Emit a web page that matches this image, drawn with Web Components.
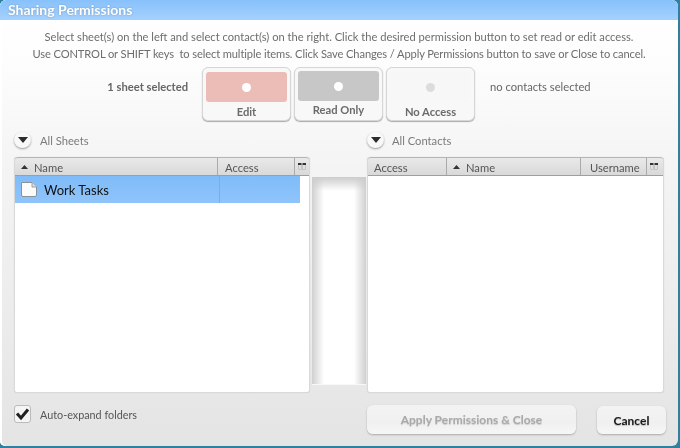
<!DOCTYPE html>
<html><head><meta charset="utf-8"><title>Sharing Permissions</title>
<style>
html,body{margin:0;padding:0;width:680px;height:448px;overflow:hidden;background:#fff}
body{font-family:Lato,"Open Sans",sans-serif;}
</style></head><body>
<sp-dialog>
  <span slot="title">Sharing Permissions</span>
  <sp-instructions>
    <div>Select sheet(s) on the left and select contact(s) on the right. Click the desired permission button to set read or edit access.</div>
    <div style="letter-spacing:-.12px">Use CONTROL or SHIFT keys&nbsp; to select multiple items. Click Save Changes / Apply Permissions button to save or Close to cancel.</div>
  </sp-instructions>
  <sp-perm-row>
    <span slot="left">1 sheet selected</span>
    <sp-perm kind="edit">Edit</sp-perm>
    <sp-perm kind="read">Read Only</sp-perm>
    <sp-perm kind="none">No Access</sp-perm>
    <span slot="right">no contacts selected</span>
  </sp-perm-row>
  <sp-columns>
    <sp-panel slot="left" label="All Sheets" cols="sheets"><sp-row>Work Tasks</sp-row></sp-panel>
    <sp-panel slot="right" label="All Contacts" cols="contacts"></sp-panel>
  </sp-columns>
  <sp-footer>
    <sp-check>Auto-expand folders</sp-check>
    <sp-btn disabled style="width:209px">Apply Permissions &amp; Close</sp-btn>
    <sp-btn style="width:69px;margin:1px 0 0 21px;height:28px">Cancel</sp-btn>
  </sp-footer>
</sp-dialog>
<script>
function def(name, html){
  customElements.define(name, class extends HTMLElement{
    constructor(){super();this.attachShadow({mode:'open'}).innerHTML=typeof html==='function'?html(this):html;}
  });
}
def('sp-dialog',`<style>
:host{display:block;width:680px;height:448px;background:#2f7f9f;position:relative;overflow:hidden}
.win{box-sizing:border-box;width:678px;height:446px;border-radius:6px 6px 6px 5px;overflow:hidden;display:flex;flex-direction:column;
 background:linear-gradient(#fff 0,#fdfdfd 60px,#f4f4f4 170px,#ebebeb 330px,#e4e4e4 446px);filter:blur(.3px);
 box-shadow:inset 2px 0 0 #fff}
.t{height:20px;flex:none;background:linear-gradient(#87c1fb,#a5d1fe);color:#fff;font:700 14px/20px Lato,sans-serif;padding-left:8px;text-shadow:0 0 2px #6b93b8}
</style><div class="win"><div class="t"><slot name="title"></slot></div><slot></slot></div>`);
def('sp-instructions',`<style>:host{display:block;height:47px;padding-top:8px;box-sizing:border-box;text-align:center;color:#6d6d6d;font-size:11.15px;line-height:17px;flex:none;white-space:nowrap}</style><slot></slot>`);
def('sp-perm-row',`<style>:host{display:flex;align-items:flex-start;height:54px;flex:none;color:#666;font-size:11.2px}
.l{width:188px;text-align:right;font-weight:700;line-height:39px;margin-right:14px;white-space:nowrap}
.r{line-height:39px;margin-left:15px;white-space:nowrap}
.b{display:flex;gap:3px}
</style><div class="l"><slot name="left"></slot></div><div class="b"><slot></slot></div><div class="r"><slot name="right"></slot></div>`);
def('sp-perm',el=>{
 const k=el.getAttribute('kind');
 const c={edit:['#ecbcb7','#fff',5],read:['#c7c7c7','#fff',4],none:['#f7f7f7','#dcdcdc',5]}[k];
 return `<style>:host{display:block;box-sizing:border-box;width:89px;height:54px;border:1px solid #d6d6d6;border-radius:6px;background:#f8f8f8;box-shadow:0 1px 1px #aaa;padding:${c[2]-1}px 3px 0;font-size:11.2px;font-weight:700;color:#6b6b6b;text-align:center}
 .s{height:30px;border-radius:3px;background:${c[0]};display:flex;align-items:center;justify-content:center}
 i{display:block;width:9px;height:9px;border-radius:50%;background:${c[1]}}
 .lb{line-height:16px;margin-top:${k==='read'?1:2}px}</style><div class="s"><i></i></div><div class="lb"><slot></slot></div>`;
});
def('sp-columns',`<style>:host{display:flex;align-items:flex-start;height:284px;flex:none;padding-left:14px}
.m{width:54px;height:209px;margin:55px 1px 0 2px;flex:none;box-sizing:border-box;border-top:1px solid #f4f4f4;border-bottom:1px solid #f8f8f8;
 background:linear-gradient(#ccc,rgba(255,255,255,0) 14px),linear-gradient(90deg,#d0d0d0,rgba(255,255,255,0) 12px),linear-gradient(270deg,#d0d0d0,rgba(255,255,255,0) 12px),#fff}
</style><slot name="left"></slot><div class="m"></div><slot name="right"></slot>`);
const tri=`<svg width="7" height="4" viewBox="0 0 7 4"><path d="M0 4L3.5 0L7 4Z" fill="#333"/></svg>`;
const grip=`<svg width="8" height="7" viewBox="0 0 8 7" style="display:block"><rect x="0" y="0" width="3.500" height="2" fill="#333"/><rect x="4.500" y="0" width="3.500" height="2" fill="#333"/><path d="M.5 2v4.500h3V2M4.500 2v4.500h3V2" fill="none" stroke="#c4c4c4"/></svg>`;
def('sp-panel',el=>{
 const sheets=el.getAttribute('cols')==='sheets';
 const heads=sheets
  ?`<div class="h" style="width:203px">${tri}<span>Name</span></div><div class="h" style="width:77px"><span style="margin-left:1px">Access</span></div>`
  :`<div class="h" style="width:79px"><span>Access</span></div><div class="h" style="width:134px">${tri}<span>Name</span></div><div class="h" style="width:66px"><span style="margin-left:3px">Username</span></div>`;
 return `<style>:host{display:block;width:297px;flex:none;color:#666;font-size:11.2px;padding-top:4px}
 :host([cols=sheets]){width:296px}
 .cap{display:flex;align-items:center;height:30px;margin-bottom:2px;gap:${sheets?9:8}px}
 .cap b{font-weight:400;color:#7b7b7b;white-space:nowrap}
 .d{width:17px;height:16px;border-radius:50%;background:#f8f8f8;box-shadow:0 1px 2px #999;display:flex;align-items:center;justify-content:center}
 .box{box-sizing:border-box;height:236px;background:#fff;border:1px solid #d9d9d9;border-top:0;border-radius:3px;box-shadow:0 0 1px #ccc}
 .hd{display:flex;height:19px;box-sizing:border-box;background:linear-gradient(#e9e9e9,#d9d9d9);border-top:1px solid #b5b5b5;border-bottom:1px solid #9f9f9f;border-radius:3px 3px 0 0;color:#555}
 .h{box-sizing:border-box;display:flex;align-items:center;gap:6px;padding:2px 0 0 6px;border-right:1px solid #aaa;white-space:nowrap;flex:none}
 .h svg{margin-top:-2px}
 .g{flex:1;padding:5px 0 0 3px}
 </style><div class="cap"><div class="d"><svg width="10" height="6" viewBox="0 0 10 6"><path d="M0 0H10L5 6Z" fill="#2b2b2b"/></svg></div><b>${el.getAttribute('label')}</b></div>
 <div class="box"><div class="hd">${heads}<div class="g">${grip}</div></div><slot></slot></div>`;
});
def('sp-row',`<style>:host{display:flex;align-items:center;box-sizing:border-box;width:285px;height:27px;background:linear-gradient(#7fbcf9,#8fc4fb);color:#111;font-size:13px;padding-left:5px;position:relative}
svg{margin-right:6px;flex:none}
.sep{position:absolute;left:204px;top:0;bottom:0;width:1px;background:#7aaee0}
</style><svg width="18" height="17" viewBox="0 0 18 17"><path d="M1.5 1.5H12L16.500 6V14a1.500 1.500 0 0 1-1.500 1.500H3A1.500 1.500 0 0 1 1.500 14Z" fill="#fbfbfb" stroke="#8c9097"/><path d="M12 1.500V6H16.500" fill="#dde1e6" stroke="#9a9ea4"/></svg><slot></slot><div class="sep"></div>`);
def('sp-footer',`<style>:host{display:flex;align-items:flex-start;flex:none;padding-left:14px;color:#555;font-size:10.8px}</style><slot></slot>`);
def('sp-check',`<style>:host{display:flex;align-items:center;width:353px;height:18px;margin-top:0;gap:9px;flex:none;color:#555;box-sizing:border-box}
.c{box-sizing:border-box;width:17px;height:18px;background:#f5f5f5;border:1px solid #bbb;border-radius:3px;display:block}
</style><div class="c"><svg width="15" height="16" viewBox="0 0 15 16" style="display:block"><path d="M2 7.500L6 12L13 3.500" fill="none" stroke="#222" stroke-width="3"/></svg></div><span><slot></slot></span>`);
def('sp-btn',el=>{
 const dis=el.hasAttribute('disabled');
 return `<style>:host{display:flex;align-items:center;justify-content:center;box-sizing:border-box;height:29px;border-radius:6px;background:linear-gradient(#f3f3f3,#f0f0f0 60%,#f6f6f6);box-shadow:0 1px 2px #aaa;font-size:12px;font-weight:700;flex:none;
 color:${dis?'#aaa':'#1a1a1a'};text-shadow:${dis?'0 1px 1px #ccc':'0 1px 1px #bbb'}}</style><slot></slot>`;
});
</script>
</body></html>
